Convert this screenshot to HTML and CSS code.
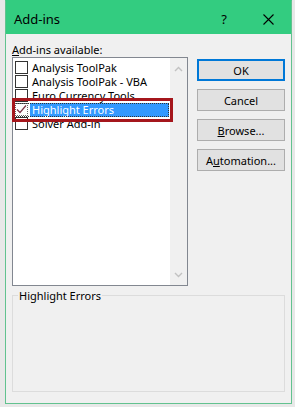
FILE: index.html
```html
<!DOCTYPE html>
<html lang="en">
<head>
<meta charset="utf-8">
<title>Add-ins</title>
<link rel="stylesheet" href="styles.css">
</head>
<body>
<div class="window">
  <div class="titlebar">
    <span class="title">Add-ins</span>
    <span class="help">?</span>
    <svg class="close" width="11" height="11" viewBox="0 0 11 11"><path d="M0.5 0.5 L10.5 10.5 M10.5 0.5 L0.5 10.5" stroke="#000" stroke-width="1.1" fill="none"/></svg>
  </div>
  <div class="content">
    <div class="label"><u>A</u>dd-ins available:</div>
    <div class="main">
      <div class="listbox">
        <div class="items">
          <div class="item"><span class="cb"></span><span class="text">Analysis ToolPak</span></div>
          <div class="item"><span class="cb"></span><span class="text">Analysis ToolPak - VBA</span></div>
          <div class="item"><span class="cb"></span><span class="text">Euro Currency Tools</span></div>
          <div class="item selected"><span class="cb checked"><svg width="11" height="11" viewBox="0 0 11 11"><path d="M1 5.5 L4 8.5 L10 1.5" stroke="#7b3547" stroke-width="1.2" fill="none"/></svg></span><span class="text">Highlight Errors</span></div>
          <div class="item"><span class="cb"></span><span class="text">Solver Add-in</span></div>
        </div>
        <div class="scrollbar">
          <svg width="9" height="6" viewBox="0 0 9 6"><path d="M1 5 L4.5 1.5 L8 5" stroke="#c2c2c2" stroke-width="1.4" fill="none"/></svg>
          <svg width="9" height="6" viewBox="0 0 9 6"><path d="M1 1 L4.5 4.5 L8 1" stroke="#c2c2c2" stroke-width="1.4" fill="none"/></svg>
        </div>
        <div class="annot"></div>
      </div>
      <div class="buttons">
        <button class="btn default">OK</button>
        <button class="btn">Cancel</button>
        <button class="btn"><u>B</u>rowse...</button>
        <button class="btn">A<u>u</u>tomation...</button>
      </div>
    </div>
    <fieldset class="group"><legend>Highlight Errors</legend></fieldset>
  </div>
</div>
</body>
</html>
```
FILE: styles.css
```css
html, body {
  margin: 0;
  padding: 0;
}
body {
  width: 295px;
  height: 407px;
  overflow: hidden;
  background: #e8e8e8;
  font-family: "Noto Sans", "Open Sans", sans-serif;
  font-size: 11px;
  color: #000;
}
.window {
  margin-left: 5px;
  width: 287px;
  height: 404px;
  box-sizing: border-box;
  border: 1px solid #62c28f;
  border-top-color: #33cc80;
  background: #f0f0f0;
  display: flex;
  flex-direction: column;
}
.titlebar {
  height: 33px;
  background: #33cc80;
  display: flex;
  align-items: center;
  padding-left: 8px;
  font-size: 13px;
}
.title {
  flex: 1;
  padding-top: 3px;
}
.help {
  margin-right: 36px;
  padding-top: 3px;
}
.close {
  margin-right: 17px;
  margin-top: 3px;
}
.content {
  padding: 0 6px;
  display: flex;
  flex-direction: column;
}
.label {
  padding-top: 8px;
  line-height: 15px;
}
.main {
  display: flex;
  gap: 9px;
}
.listbox {
  position: relative;
  width: 176px;
  height: 229px;
  box-sizing: border-box;
  border: 1px solid #828790;
  background: #fff;
  display: flex;
}
.items {
  flex: 1;
  padding-top: 3px;
}
.item {
  height: 14px;
  display: flex;
  align-items: flex-start;
  padding-left: 2px;
  line-height: 14px;
  white-space: nowrap;
}
.cb {
  width: 13px;
  height: 13px;
  box-sizing: border-box;
  border: 1px solid #333;
  background: #fff;
  flex: none;
  display: flex;
  align-items: center;
  justify-content: center;
}
.item .text {
  margin-left: 2px;
  padding-left: 2px;
  flex: 1;
}
.item.selected {
  outline: 1px dotted #333;
  outline-offset: -1px;
  margin-right: 1px;
}
.item.selected .cb {
  border: 1px dotted #666;
}
.item.selected .text {
  background: #3399ff;
  color: #fff;
}
.scrollbar {
  width: 17px;
  background: #f0f0f0;
  display: flex;
  flex-direction: column;
  justify-content: space-between;
  align-items: center;
  padding: 8px 0 7px;
  box-sizing: border-box;
}
.annot {
  position: absolute;
  left: -1px;
  top: 40px;
  width: 161px;
  height: 24px;
  box-sizing: border-box;
  border: 3px solid #a5161c;
}
.buttons {
  margin-top: 2px;
  display: flex;
  flex-direction: column;
  gap: 8px;
}
.btn {
  width: 88px;
  height: 22px;
  box-sizing: border-box;
  border: 1px solid #adadad;
  background: #e1e1e1;
  font-family: inherit;
  font-size: 11px;
  color: #000;
  padding: 0;
  margin: 0;
}
.btn.default {
  border: 2px solid #0078d7;
}
.group {
  margin: 2px 0 0;
  padding: 0;
  height: 104px;
  box-sizing: border-box;
  border: 1px solid #dcdcdc;
  min-width: 0;
}
.group legend {
  margin-left: 5px;
  padding: 0 1px;
  line-height: 15px;
}
```
